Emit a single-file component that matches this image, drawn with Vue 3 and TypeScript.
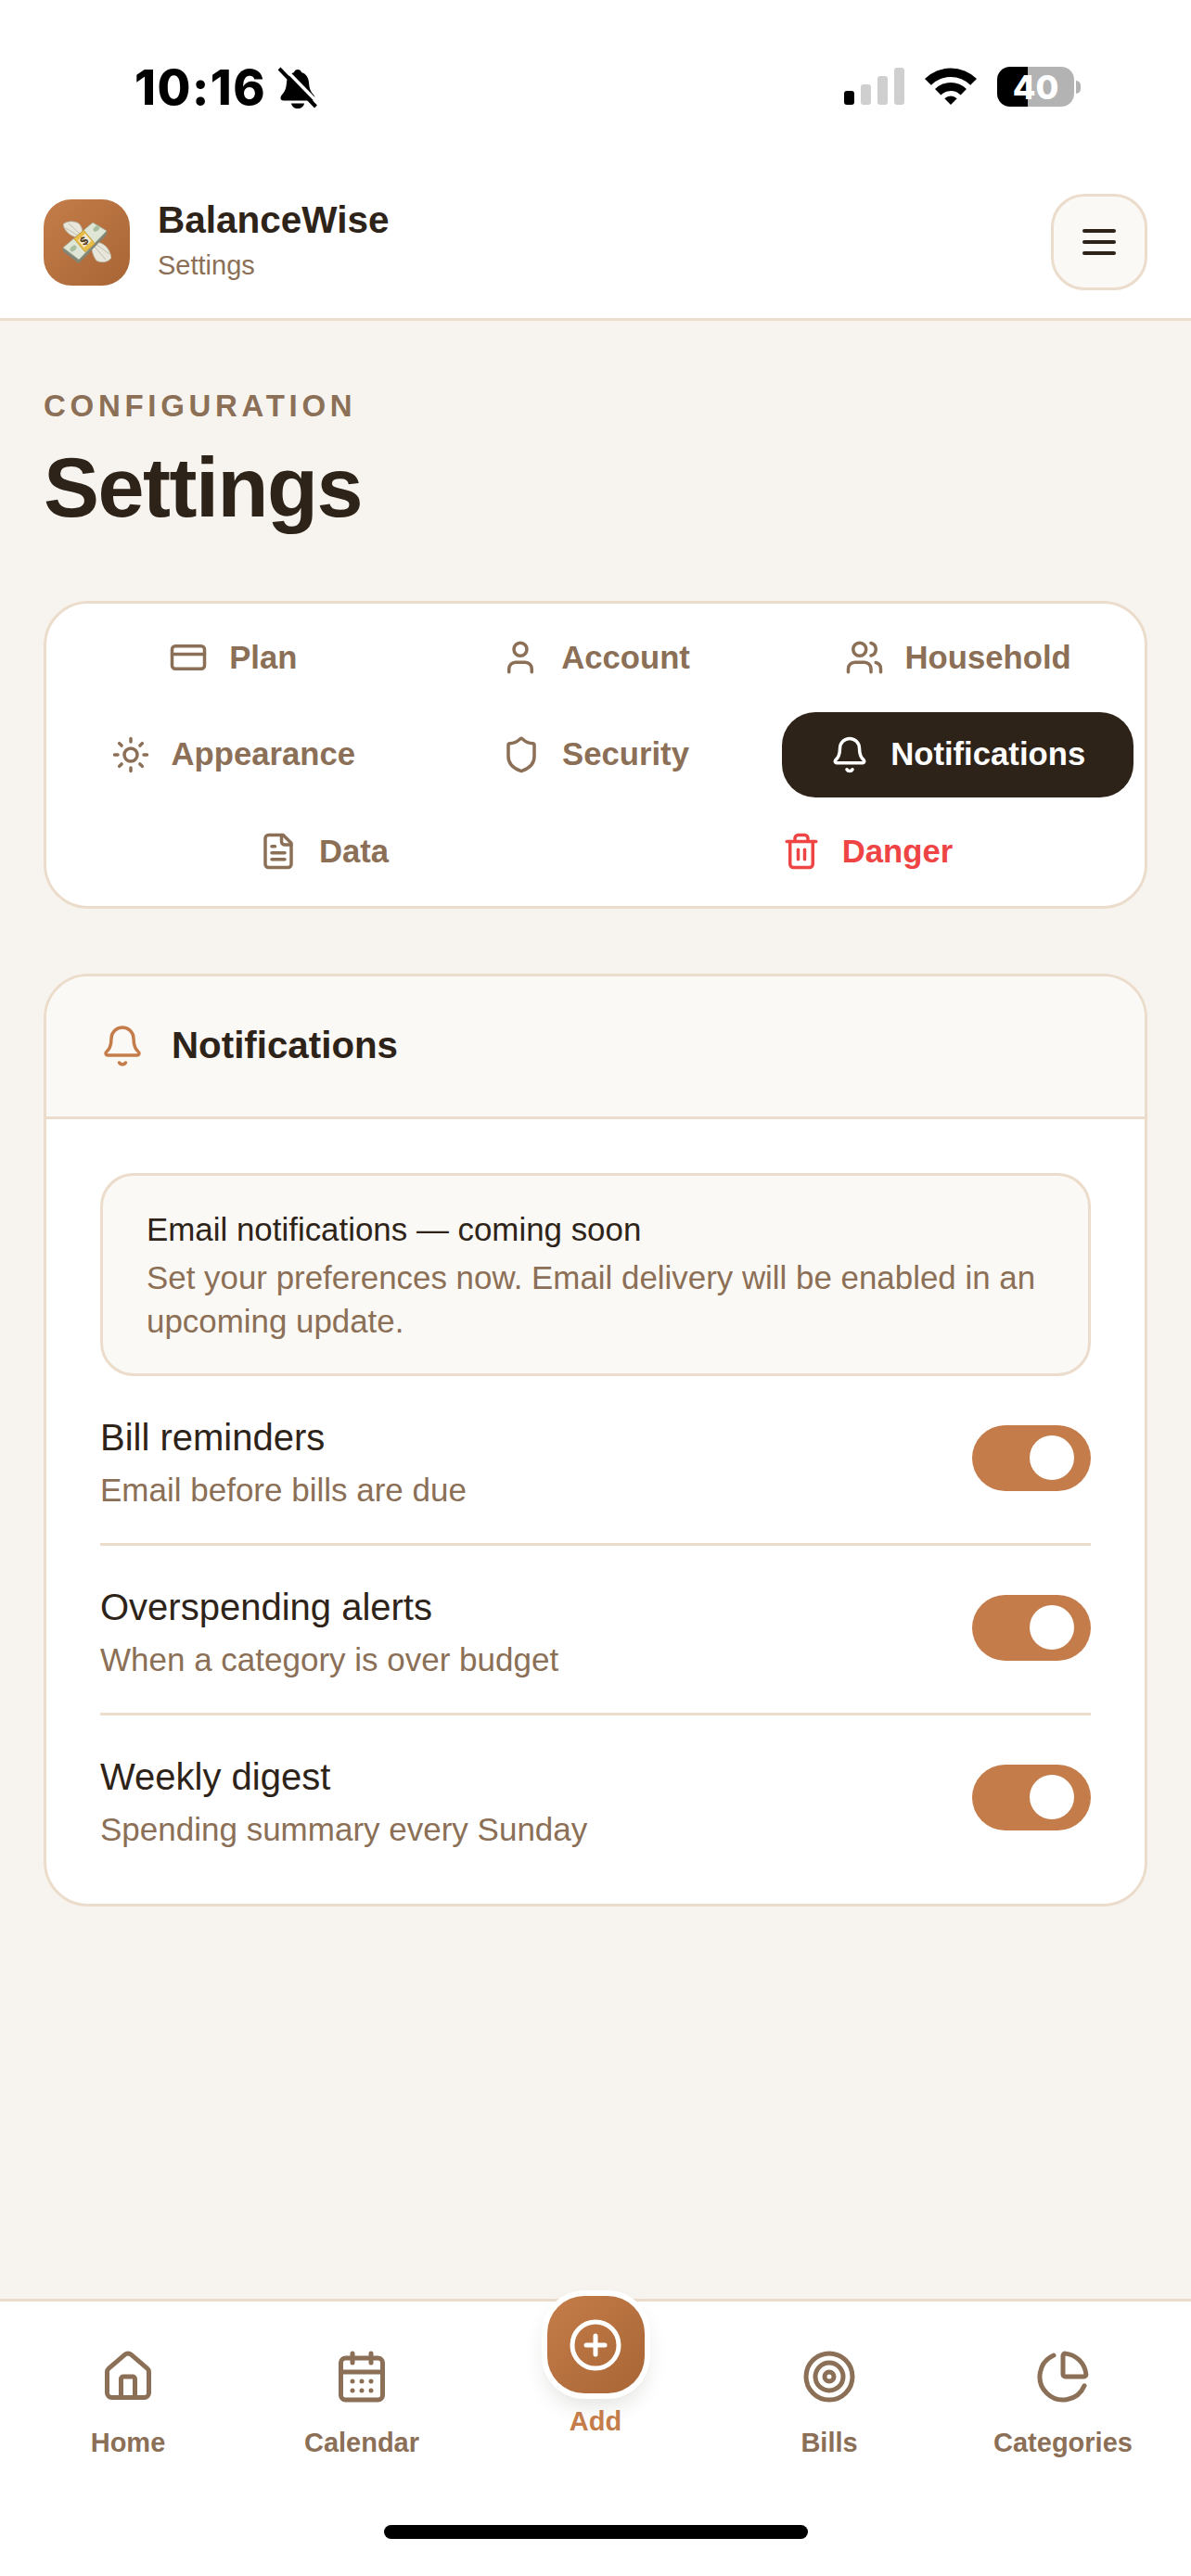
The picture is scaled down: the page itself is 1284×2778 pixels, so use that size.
<template>
  <div class="app">
    <!-- status bar -->
    <div class="status-bar">
      <div class="status-left">
        <span class="clock">10:16</span>
        <svg class="muted-bell" viewBox="0 0 42 45" width="42" height="45">
          <path d="M21 3c2 0 3.500 1.300 4 3 5 1.500 7.500 5.500 8 11 .5 6 1.500 9 4.500 12.500 1.500 1.800 2 3 2 4.500s-1 2.500-3 2.500H6c-2.500 0-3.500-1-3.500-2.500 0-1.500.5-2.700 2-4.500C7.500 26 8.500 23 9 17c.5-5.500 3-9.500 8-11 .5-1.700 2-3 4-3z" />
          <path d="M14 39.500h14c-.5 3.500-3.500 5.500-7 5.500s-6.500-2-7-5.500z" />
          <path class="slash-gap" d="M4 -1 44 40" />
          <path class="slash" d="M1 2 40.500 43" />
        </svg>
      </div>
      <div class="status-right">
        <div class="signal">
          <span v-for="(h, i) in signalBars" :key="h" class="signal-bar" :class="{ on: i === 0 }" :style="{ height: h + 'px' }"></span>
        </div>
        <svg class="wifi" viewBox="0 0 56 41" width="56" height="41">
          <path d="M0 13A40 40 0 0 1 56 13L49.200 19.800A30 30 0 0 0 6.800 19.800Z" />
          <path d="M11 24A24 24 0 0 1 45 24L38.600 30.400A15 15 0 0 0 17.400 30.400Z" />
          <path d="M21.300 34.300A9.500 9.500 0 0 1 34.700 34.300L28 41Z" />
        </svg>
        <div class="battery">
          <div class="battery-body"><span>40</span></div>
          <div class="battery-tip"></div>
        </div>
      </div>
    </div>

    <!-- top header -->
    <header class="topbar">
      <div class="brand">
        <div class="logo">
          <!-- money with wings -->
          <svg viewBox="0 0 52 46" width="52" height="46">
            <g fill="#e8e6da" stroke="#b4b2a3" stroke-width="0.8" stroke-linejoin="round">
              <path d="M19 18C11 19 2 13 0 4 4 0 12 0 17 3 21 7 22 13 19 18Z" />
              <path d="M31 24C40 21 50 27 52 40 49 45 41 46 36 43 32 38 30 30 31 24Z" />
            </g>
            <g fill="none" stroke="#b4b2a3" stroke-width="0.8">
              <path d="M19 18 3 8M18 14 6 3" />
              <path d="M33 27 46 42M35 25 50 36" />
            </g>
            <path d="M0 29V33L17 46 47 15V10L17 41Z" fill="#7f8677" />
            <path d="M0 29 32 2 47 11 17 42Z" fill="#dfe6d6" stroke="#a3ac97" stroke-width="0.8" stroke-linejoin="round" />
            <ellipse cx="36" cy="8.500" rx="4" ry="2.500" transform="rotate(-40 36 8.500)" fill="#a9bd9f" />
            <ellipse cx="11" cy="30" rx="4" ry="2.500" transform="rotate(-40 11 30)" fill="#a9bd9f" />
            <path d="M22.300 10.300 34.300 24.700 23.700 33.700 11.700 19.300Z" fill="#e8bd48" stroke="#c4962a" stroke-width="0.8" />
            <path d="M24 14 30.500 22 22.500 29 16 21Z" fill="#f3ead0" />
            <text x="23" y="26" class="logo-dollar" transform="rotate(-40 23 22)">$</text>
          </svg>
        </div>
        <div class="brand-text">
          <div class="brand-name">BalanceWise</div>
          <div class="brand-sub">Settings</div>
        </div>
      </div>
      <button class="menu-btn">
        <svg class="icon" viewBox="0 0 24 24" width="48" height="48"><path d="M4 6h16" /><path d="M4 12h16" /><path d="M4 18h16" /></svg>
      </button>
    </header>

    <main class="page">
      <div class="eyebrow">CONFIGURATION</div>
      <h1 class="page-title">Settings</h1>

      <!-- tabs -->
      <nav class="tabs">
        <div
          v-for="tab in tabs"
          :key="tab.label"
          class="tab"
          :class="{ active: tab.label === activeTab, danger: tab.label === 'Danger' }"
        >
          <svg class="icon tab-icon" viewBox="0 0 24 24" width="42" height="42"><path v-for="d in tab.paths" :key="d" :d="d" /></svg>
          <span>{{ tab.label }}</span>
        </div>
      </nav>

      <!-- notifications card -->
      <section class="card">
        <div class="card-head">
          <svg class="icon head-icon" viewBox="0 0 24 24" width="48" height="48"><path v-for="d in icons.bell" :key="d" :d="d" /></svg>
          <h2>Notifications</h2>
        </div>
        <div class="card-body">
          <div class="notice">
            <div class="notice-title">Email notifications — coming soon</div>
            <div class="notice-text">Set your preferences now. Email delivery will be enabled in an upcoming update.</div>
          </div>
          <div v-for="row in rows" :key="row.title" class="pref-row">
            <div class="pref-text">
              <div class="pref-title">{{ row.title }}</div>
              <div class="pref-sub">{{ row.sub }}</div>
            </div>
            <div class="toggle"><span class="knob"></span></div>
          </div>
        </div>
      </section>
    </main>

    <!-- bottom nav -->
    <footer class="bottom-nav">
      <div class="nav-items">
        <div v-for="item in navItems" :key="item.label" class="nav-item" :class="{ add: item.label === 'Add' }">
          <div v-if="item.label === 'Add'" class="add-btn">
            <svg class="icon" viewBox="0 0 24 24" width="60" height="60"><path v-for="d in item.paths" :key="d" :d="d" /></svg>
          </div>
          <svg v-else class="icon" viewBox="0 0 24 24" width="60" height="60"><path v-for="d in item.paths" :key="d" :d="d" /></svg>
          <span>{{ item.label }}</span>
        </div>
      </div>
      <div class="home-indicator"></div>
    </footer>
  </div>
</template>

<script setup lang="ts">
const signalBars = [15, 22, 31, 40]

const circle = (cx: number, cy: number, r: number) =>
  `M${cx - r} ${cy}a${r} ${r} 0 1 1 ${r * 2} 0a${r} ${r} 0 1 1 ${-r * 2} 0z`

const icons = {
  card: ['M4 5h16a2 2 0 0 1 2 2v10a2 2 0 0 1-2 2H4a2 2 0 0 1-2-2V7a2 2 0 0 1 2-2z', 'M2 10h20'],
  user: ['M19 21v-2a4 4 0 0 0-4-4H9a4 4 0 0 0-4 4v2', circle(12, 7, 4)],
  users: ['M16 21v-2a4 4 0 0 0-4-4H6a4 4 0 0 0-4 4v2', circle(9, 7, 4), 'M22 21v-2a4 4 0 0 0-3-3.87', 'M16 3.13a4 4 0 0 1 0 7.75'],
  sun: [circle(12, 12, 4), 'M12 2v2', 'M12 20v2', 'm4.93 4.93 1.41 1.41', 'm17.66 17.66 1.41 1.41', 'M2 12h2', 'M20 12h2', 'm6.34 17.66-1.41 1.41', 'm19.07 4.93-1.41 1.41'],
  shield: ['M20 13c0 5-3.5 7.5-7.66 8.95a1 1 0 0 1-.67-.01C7.5 20.5 4 18 4 13V6a1 1 0 0 1 1-1c2 0 4.5-1.2 6.24-2.72a1.17 1.17 0 0 1 1.52 0C14.51 3.81 17 5 19 5a1 1 0 0 1 1 1z'],
  bell: ['M10.268 21a2 2 0 0 0 3.464 0', 'M3.262 15.326A1 1 0 0 0 4 17h16a1 1 0 0 0 .74-1.673C19.41 13.956 18 12.499 18 8A6 6 0 0 0 6 8c0 4.499-1.411 5.956-2.738 7.326'],
  file: ['M15 2H6a2 2 0 0 0-2 2v16a2 2 0 0 0 2 2h12a2 2 0 0 0 2-2V7Z', 'M14 2v4a2 2 0 0 0 2 2h4', 'M10 9H8', 'M16 13H8', 'M16 17H8'],
  trash: ['M3 6h18', 'M19 6v14c0 1-1 2-2 2H7c-1 0-2-1-2-2V6', 'M8 6V4c0-1 1-2 2-2h4c1 0 2 1 2 2v2', 'M10 11v6', 'M14 11v6'],
  house: ['M15 21v-8a1 1 0 0 0-1-1h-4a1 1 0 0 0-1 1v8', 'M3 10a2 2 0 0 1 .709-1.528l7-5.999a2 2 0 0 1 2.582 0l7 5.999A2 2 0 0 1 21 10v9a2 2 0 0 1-2 2H5a2 2 0 0 1-2-2z'],
  calendar: ['M8 2v4', 'M16 2v4', 'M5 4h14a2 2 0 0 1 2 2v14a2 2 0 0 1-2 2H5a2 2 0 0 1-2-2V6a2 2 0 0 1 2-2z', 'M3 10h18', 'M8 14h.01', 'M12 14h.01', 'M16 14h.01', 'M8 18h.01', 'M12 18h.01', 'M16 18h.01'],
  plus: [circle(12, 12, 10), 'M8 12h8', 'M12 8v8'],
  target: [circle(12, 12, 10), circle(12, 12, 6), circle(12, 12, 2)],
  pie: ['M21 12c.552 0 1.005-.449.95-.998a10 10 0 0 0-8.953-8.951c-.55-.055-.998.398-.998.95v8a1 1 0 0 0 1 1z', 'M21.21 15.89A10 10 0 1 1 8 2.83']
}

const activeTab = 'Notifications'

const tabs = [
  { label: 'Plan', paths: icons.card },
  { label: 'Account', paths: icons.user },
  { label: 'Household', paths: icons.users },
  { label: 'Appearance', paths: icons.sun },
  { label: 'Security', paths: icons.shield },
  { label: 'Notifications', paths: icons.bell },
  { label: 'Data', paths: icons.file },
  { label: 'Danger', paths: icons.trash }
]

const rows = [
  { title: 'Bill reminders', sub: 'Email before bills are due' },
  { title: 'Overspending alerts', sub: 'When a category is over budget' },
  { title: 'Weekly digest', sub: 'Spending summary every Sunday' }
]

const navItems = [
  { label: 'Home', paths: icons.house },
  { label: 'Calendar', paths: icons.calendar },
  { label: 'Add', paths: icons.plus },
  { label: 'Bills', paths: icons.target },
  { label: 'Categories', paths: icons.pie }
]
</script>

<style scoped>
.app {
  display: flex;
  flex-direction: column;
  width: 1284px;
  height: 2778px;
  overflow: hidden;
  background: #f7f4ef;
  color: #2e2318;
  font-family: "Liberation Sans", Arial, sans-serif;
}

.icon {
  display: block;
  flex-shrink: 0;
  fill: none;
  stroke: currentColor;
  stroke-width: 2;
  stroke-linecap: round;
  stroke-linejoin: round;
}

/* status bar */
.status-bar {
  display: flex;
  justify-content: space-between;
  align-items: flex-start;
  height: 179px;
  padding: 72px 119px 0 145px;
  box-sizing: border-box;
  background: #fff;
  color: #000;
}

.status-left,
.status-right {
  display: flex;
}

.status-left {
  gap: 13px;
}

.clock {
  font-family: Inter, sans-serif;
  font-size: 52px;
  font-weight: 800;
  line-height: 46px;
  letter-spacing: 1.5px;
}

.muted-bell path {
  fill: #000;
}

.muted-bell .slash-gap {
  fill: none;
  stroke: #fff;
  stroke-width: 3.5;
}

.muted-bell .slash {
  fill: none;
  stroke: #000;
  stroke-width: 4;
}

.status-right {
  align-items: flex-end;
  height: 43px;
  gap: 22px;
}

.signal {
  display: flex;
  align-items: flex-end;
  gap: 7px;
  padding-bottom: 2px;
}

.signal-bar {
  width: 11px;
  border-radius: 3px;
  background: #cfcfcf;
}

.signal-bar.on {
  background: #000;
}

.wifi {
  fill: #000;
  margin-bottom: 2px;
}

.battery {
  display: flex;
  align-items: center;
  gap: 2px;
  height: 43px;
}

.battery-body {
  display: flex;
  align-items: center;
  justify-content: center;
  width: 83px;
  height: 43px;
  border-radius: 14px;
  background: linear-gradient(90deg, #000 40%, #b3b3b3 40%);
  color: #fff;
  font-family: Inter, sans-serif;
  font-size: 36px;
  font-weight: 800;
}

.battery-tip {
  width: 5px;
  height: 14px;
  border-radius: 0 5px 5px 0;
  background: #b3b3b3;
}

/* top header */
.topbar {
  display: flex;
  align-items: center;
  justify-content: space-between;
  padding: 30px 47px;
  background: #fff;
  border-bottom: 3px solid #ebdccb;
}

.brand {
  display: flex;
  align-items: center;
  gap: 30px;
}

.logo {
  display: flex;
  align-items: center;
  justify-content: center;
  width: 93px;
  height: 93px;
  border-radius: 30px;
  background: linear-gradient(135deg, #c47d4a, #a86535);
}

.logo-dollar {
  font-size: 13px;
  font-weight: 700;
  text-anchor: middle;
  fill: #4a3518;
}

.brand-text {
  padding-bottom: 5px;
}

.brand-name {
  font-size: 40.5px;
  font-weight: 700;
  line-height: 48px;
}

.brand-sub {
  margin-top: 7px;
  font-size: 29px;
  line-height: 36px;
  color: #8b6f56;
}

.menu-btn {
  display: flex;
  align-items: center;
  justify-content: center;
  width: 104px;
  height: 104px;
  padding: 0;
  border: 3px solid #ebdccb;
  border-radius: 36px;
  background: #fbf9f5;
  color: #2e2318;
}

/* page */
.page {
  flex: 1;
  padding: 72px 47px 0;
}

.eyebrow {
  font-size: 33px;
  font-weight: 700;
  line-height: 40px;
  letter-spacing: 4.7px;
  color: #8b6f56;
}

.page-title {
  margin: 18px 0 72px;
  font-size: 90px;
  font-weight: 700;
  line-height: 100px;
  letter-spacing: -1.5px;
}

.tabs {
  display: flex;
  flex-wrap: wrap;
  gap: 12px;
  padding: 12px;
  background: #fff;
  border: 3px solid #ebdccb;
  border-radius: 48px;
}

.tab {
  flex: 1 1 calc(33.33% - 8px);
  box-sizing: border-box;
  display: flex;
  align-items: center;
  justify-content: center;
  gap: 23px;
  height: 92.5px;
  border-radius: 36px;
  font-size: 34.7px;
  font-weight: 700;
  color: #8b6f56;
}

.tab.active {
  background: #2e2318;
  color: #fff;
}

.tab.danger {
  color: #ef4444;
}

.card {
  margin-top: 70px;
  background: #fff;
  border: 3px solid #ebdccb;
  border-radius: 48px;
  overflow: hidden;
}

.card-head {
  display: flex;
  align-items: center;
  gap: 29px;
  height: 151px;
  padding: 0 58px;
  background: #fbf9f5;
  border-bottom: 3px solid #ebdccb;
}

.head-icon {
  color: #c47d4a;
  stroke-width: 1.75;
}

.card-head h2 {
  margin: 0;
  font-size: 40.3px;
  font-weight: 700;
}

.card-body {
  padding: 58px 58px 23px;
}

.notice {
  padding: 34px 47px 33.5px;
  background: #fbf9f5;
  border: 3px solid #ebdccb;
  border-radius: 36px;
}

.notice-title {
  font-size: 34.9px;
  line-height: 48px;
}

.notice-text {
  margin-top: 4px;
  font-size: 34.9px;
  line-height: 47px;
  color: #8b6f56;
}

.pref-row {
  display: flex;
  align-items: center;
  justify-content: space-between;
  padding: 35px 0 31px;
  border-bottom: 3px solid #ebdccb;
}

.pref-row:last-child {
  border-bottom: 0;
}

.pref-title {
  font-size: 40px;
  line-height: 62px;
}

.pref-sub {
  font-size: 35px;
  line-height: 52px;
  color: #8b6f56;
}

.toggle {
  display: flex;
  align-items: center;
  justify-content: flex-end;
  width: 128px;
  height: 71px;
  margin-top: -8px;
  padding-right: 18px;
  box-sizing: border-box;
  border-radius: 36px;
  background: #c47d4a;
}

.knob {
  width: 48px;
  height: 48px;
  border-radius: 50%;
  background: #fff;
}

/* bottom nav */
.bottom-nav {
  height: 299px;
  box-sizing: border-box;
  background: #fff;
  border-top: 3px solid #ebdccb;
}

.nav-items {
  display: grid;
  grid-template-columns: repeat(5, 1fr);
  height: 258px;
  padding: 51px 12px 0;
  box-sizing: border-box;
}

.nav-item {
  display: flex;
  flex-direction: column;
  align-items: center;
  font-size: 29px;
  font-weight: 700;
  line-height: 36px;
  color: #8b6f56;
}

.nav-item span {
  margin-top: 23px;
}

.nav-item.add {
  margin-top: -57px;
  color: #c47d4a;
}

.add-btn {
  display: flex;
  align-items: center;
  justify-content: center;
  width: 105px;
  height: 105px;
  border-radius: 40px;
  background: linear-gradient(135deg, #c47d4a, #a86535);
  color: #fff;
  box-shadow: 0 0 0 6px #fff, 0 12px 24px rgba(46, 35, 24, 0.14);
}

.nav-item.add span {
  margin-top: 12px;
}

.home-indicator {
  width: 457px;
  height: 15px;
  margin: -17px auto 0;
  border-radius: 8px;
  background: #000;
}
</style>

<style>
body {
  background: #f7f4ef;
}
</style>
